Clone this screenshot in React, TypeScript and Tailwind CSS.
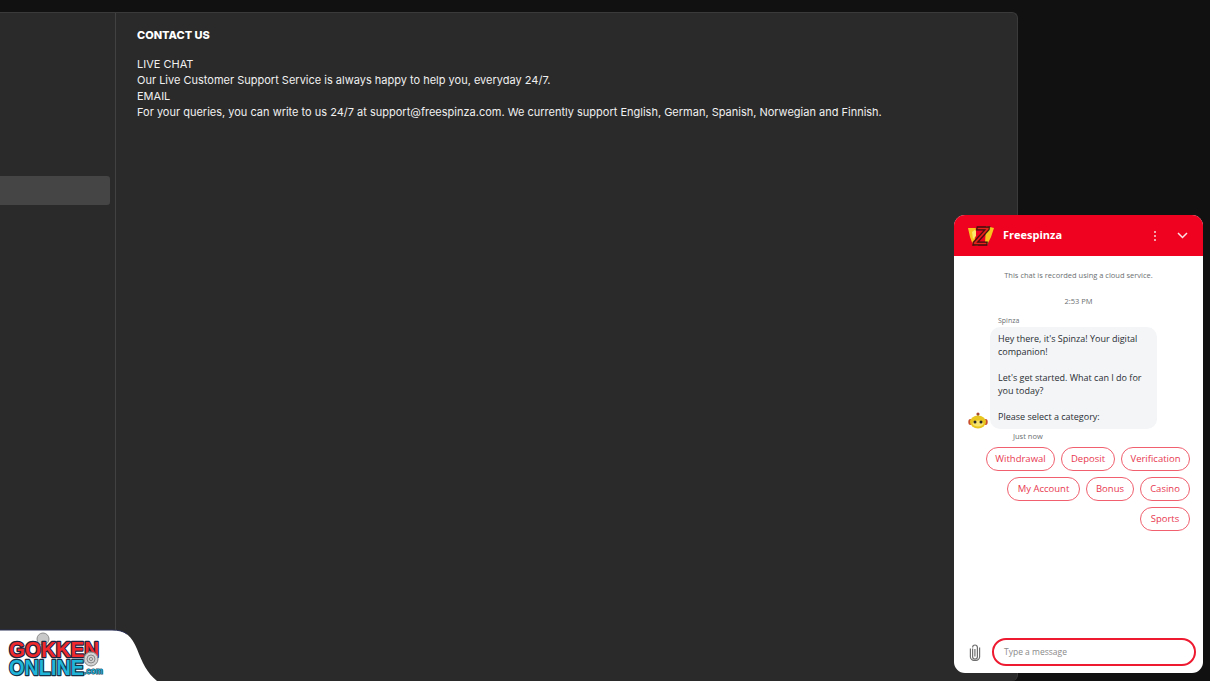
import React from "react";

const Z = () => (
  <svg width="28" height="26" viewBox="0 0 28 26" className="shrink-0">
    <polygon points="1,5 9,5 8,17 11,23 6,22 3,14" fill="#f7c51e" />
    <polygon points="19,3 27,5 24,14 20,22 18,20" fill="#f7c51e" />
    <polygon points="5,9 9,6 9,13 6,16" fill="#fde96b" />
    <text x="14" y="22" textAnchor="middle" fontFamily="'Liberation Sans', sans-serif" fontWeight="900" fontStyle="italic" fontSize="25" fill="#e8231c" stroke="#4a0d0d" strokeWidth="1.3">Z</text>
  </svg>
);

const Robot = () => (
  <svg width="20" height="17" viewBox="0 0 20 17" className="shrink-0">
    <circle cx="10" cy="2" r="1.6" fill="#b0462e" />
    <rect x="9.4" y="2" width="1.2" height="3" fill="#8a5a2a" />
    <ellipse cx="2.3" cy="10" rx="2" ry="3" fill="#c9502f" />
    <ellipse cx="17.7" cy="10" rx="2" ry="3" fill="#c9502f" />
    <ellipse cx="10" cy="10" rx="8" ry="6.4" fill="#e9c61f" />
    <ellipse cx="10" cy="11.5" rx="5.4" ry="3" fill="#f7e46a" />
    <circle cx="7" cy="10" r="1.5" fill="#2a2a2a" />
    <circle cx="13" cy="10" r="1.5" fill="#2a2a2a" />
  </svg>
);

const Clip = () => (
  <svg width="12" height="17" viewBox="0 0 12 17" fill="none" stroke="#6f6f6f" strokeWidth="1.2" className="shrink-0">
    <path d="M3.6 4.5v8.2a2.4 2.4 0 0 0 4.8 0V3.4a2.4 2.4 0 0 0-4.8 0" transform="translate(0 0)" />
    <path d="M1.4 4.5v8.6a4.6 3.4 0 0 0 9.2 0V3.4" />
    <path d="M5.9 5v7.4" />
  </svg>
);

const Chip = ({ label, w }: { label: string; w: string }) => (
  <div className={`${w} h-[24px] rounded-full border border-[#f0606f] flex items-center justify-center text-[#e8384f] text-[9.5px] leading-none`}>
    {label}
  </div>
);

const Logo = () => (
  <svg width="160" height="52" viewBox="0 0 160 52" className="absolute left-0 bottom-0">
    <path d="M0 1H112C126 1 132 8 137 20C142 33 147 44 157 52H0Z" fill="#ffffff" />
    <path d="M0 1H112C118 1 123 2 127 5" fill="none" stroke="#2a2f55" strokeWidth="1" />
    <circle cx="43" cy="10" r="6" fill="#c9c9c9" stroke="#8d8d8d" />
    <g fontFamily="'Liberation Sans', sans-serif" fontWeight="900" paintOrder="stroke" strokeLinejoin="round">
      <text x="9" y="28" fontSize="22" textLength="90" lengthAdjust="spacingAndGlyphs" fill="#f02a2c" stroke="#1c2340" strokeWidth="2.4">GOKKEN</text>
      <text x="9" y="46" fontSize="22" textLength="75" lengthAdjust="spacingAndGlyphs" fill="#20b4d8" stroke="#123048" strokeWidth="2.4">ONLINE</text>
      <text x="84" y="45" fontSize="8.5" textLength="19" lengthAdjust="spacingAndGlyphs" fill="#20b4d8" stroke="#123048" strokeWidth="1">.com</text>
    </g>
    <circle cx="91" cy="30" r="7" fill="#d2d2d2" stroke="#888" />
    <circle cx="91" cy="30" r="4" fill="none" stroke="#888" />
    <circle cx="91" cy="30" r="1.6" fill="none" stroke="#888" />
  </svg>
);

const Chat = () => (
  <div className="absolute left-[954px] top-[215px] w-[249px] h-[458px] rounded-[11px] overflow-hidden bg-white flex flex-col font-['Open_Sans',sans-serif]">
    <div className="h-[41px] bg-[#ee0220] flex items-center pl-[13px] pr-[15px] shrink-0">
      <Z />
      <span className="ml-[8px] text-white text-[11px] font-bold flex-1">Freespinza</span>
      <svg width="4" height="12" viewBox="0 0 4 12" className="mr-[20px]" fill="#f6c8cc">
        <circle cx="2" cy="2" r="1.1" /><circle cx="2" cy="6" r="1.1" /><circle cx="2" cy="10" r="1.1" />
      </svg>
      <svg width="11" height="7" viewBox="0 0 11 7" fill="none" stroke="#fbe3e5" strokeWidth="1.5">
        <path d="M1 1l4.5 4.5L10 1" />
      </svg>
    </div>
    <div className="flex-1 flex flex-col">
      <p className="text-center text-[7.5px] leading-[10px] text-[#6b6f72] mt-[14px]">This chat is recorded using a cloud service.</p>
      <p className="text-center text-[7.5px] leading-[10px] text-[#6b6f72] mt-[16px]">2:53 PM</p>
      <p className="text-[7px] leading-[9px] text-[#6b6f72] ml-[44px] mt-[10px]">Spinza</p>
      <div className="flex items-end ml-[14px] mt-[2px]">
        <Robot />
        <div className="ml-[2px] w-[167px] h-[102px] bg-[#f3f5f7] rounded-[10px] pl-[8px] pr-[6px] pt-[5px] text-[9px] leading-[13px] text-[#2a2e33]">
          <p>Hey there, it's Spinza! Your digital companion!</p>
          <p className="mt-[13px]">Let's get started. What can I do for you today?</p>
          <p className="mt-[13px]">Please select a category:</p>
        </div>
      </div>
      <p className="text-[7.5px] leading-[10px] text-[#6b6f72] ml-[59px] mt-[2px]">Just now</p>
      <div className="flex flex-col items-end gap-[6px] mr-[13px] mt-[6px]">
        <div className="flex gap-[6px]">
          <Chip label="Withdrawal" w="w-[69px]" />
          <Chip label="Deposit" w="w-[54px]" />
          <Chip label="Verification" w="w-[69px]" />
        </div>
        <div className="flex gap-[6px]">
          <Chip label="My Account" w="w-[73px]" />
          <Chip label="Bonus" w="w-[48px]" />
          <Chip label="Casino" w="w-[50px]" />
        </div>
        <Chip label="Sports" w="w-[50px]" />
      </div>
    </div>
    <div className="flex items-center pl-[15px] pr-[7px] pb-[7px] shrink-0">
      <Clip />
      <div className="ml-[11px] flex-1 h-[28px] rounded-full border-2 border-[#ee1a30] flex items-center pl-[10px] text-[8.5px] text-[#8a8a8a]">
        Type a message
      </div>
    </div>
  </div>
);

export default function App() {
  return (
    <div className="relative w-[1210px] h-[681px] overflow-hidden bg-[#111111] pt-[12px] font-['Inter',sans-serif]">
      <div className="w-[1018px] h-full flex bg-[#2a2a2a] border-t border-r border-[#3a3a3a] rounded-tr-[6px] rounded-br-[6px]">
        <aside className="w-[116px] shrink-0 border-r border-[#414141] pt-[163px]">
          <div className="w-[110px] h-[29px] bg-[#454545] rounded-r-[3px]" />
        </aside>
        <main className="flex-1 pl-[21px] pt-[15px] text-white">
          <h1 className="text-[11px] leading-[14px] font-extrabold">CONTACT US</h1>
          <div className="mt-[14px] text-[11px] leading-[16px] text-[#f0f0f0]">
            <p>LIVE CHAT</p>
            <p>Our Live Customer Support Service is always happy to help you, everyday 24/7.</p>
            <p>EMAIL</p>
            <p>For your queries, you can write to us 24/7 at support@freespinza.com. We currently support English, German, Spanish, Norwegian and Finnish.</p>
          </div>
        </main>
      </div>
      <Chat />
      <Logo />
    </div>
  );
}
